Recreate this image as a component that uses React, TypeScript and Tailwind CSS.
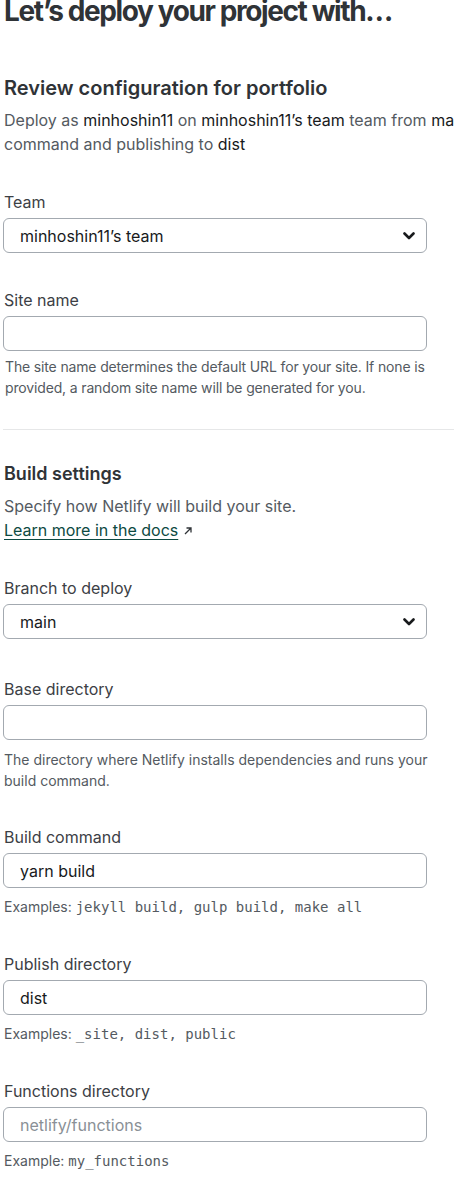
import React from 'react';

const font = { fontFamily: 'Inter, "Noto Sans", sans-serif' };

function Chevron() {
  return (
    <svg width="12" height="8" viewBox="0 0 12 8" className="text-[#181a1c]">
      <path d="M1.5 1.5 L6 6 L10.5 1.5" fill="none" stroke="currentColor" strokeWidth="2.6" strokeLinecap="round" strokeLinejoin="round" />
    </svg>
  );
}

function Label({ children }: { children: React.ReactNode }) {
  return <label className="block text-[16px] leading-6 text-[#3c4045]">{children}</label>;
}

function Field({ value, placeholder, select }: { value?: string; placeholder?: string; select?: boolean }) {
  return (
    <div className="mt-[4px] w-[424px] h-[35px] border border-[#a3a9b0] rounded-[6px] flex items-center justify-between pl-4 pr-[11px] bg-white">
      {value ? (
        <span className="text-[16px] text-[#181a1c]">{value}</span>
      ) : (
        <span className="text-[16px] text-[#8a9096]">{placeholder}</span>
      )}
      {select && <Chevron />}
    </div>
  );
}

function Help({ children, top = 'mt-[5px]' }: { children: React.ReactNode; top?: string }) {
  return <p className={`${top} text-[14px] leading-[21px] text-[#545a61]`}>{children}</p>;
}

const Code = ({ children }: { children: React.ReactNode }) => (
  <code className="text-[14px]" style={{ fontFamily: '"DejaVu Sans Mono", "Liberation Mono", monospace' }}>{children}</code>
);

export default function App() {
  return (
    <div className="w-[454px] h-[1185px] overflow-hidden bg-white" style={font}>
      <div className="w-[680px] pl-[3px]">
        <h1 className="-mt-[5px] pl-[1px] text-[28px] leading-[32px] font-bold text-[#2f3337] tracking-[-1.4px]">
          Let’s deploy your project with…
        </h1>

        {/* review */}
        <h2 className="mt-[47px] pl-[1px] text-[20px] leading-7 font-semibold text-[#2f3337]">
          Review configuration for portfolio
        </h2>
        <p className="mt-[6px] pl-[1px] w-[650px] text-[16px] leading-6 text-[#545a61]">
          Deploy as <span className="text-[#181a1c]">minhoshin11</span> on{' '}
          <span className="text-[#181a1c]">minhoshin11’s team</span> team from{' '}
          <span className="text-[#181a1c]">main</span> branch using <span className="text-[#181a1c]">yarn build</span>{' '}
          command and publishing to <span className="text-[#181a1c]">dist</span>
        </p>

        <div className="mt-[34px] pl-[1px]">
          <Label>Team</Label>
        </div>
        <Field value="minhoshin11’s team" select />

        <div className="mt-[35px] pl-[1px]">
          <Label>Site name</Label>
        </div>
        <Field />
        <div className="pl-[2px]">
          <Help>
            <span className="tracking-[-0.15px]">
              The site name determines the default URL for your site. If none is
              <br />
              provided, a random site name will be generated for you.
            </span>
          </Help>
        </div>

        <div className="mt-[31px] w-[451px] border-t border-[#e6e7e8]" />

        {/* build settings */}
        <h3 className="mt-[31px] pl-[1px] text-[18px] leading-[26px] font-semibold text-[#2f3337]">Build settings</h3>
        <p className="mt-[7px] pl-[1px] text-[16px] leading-6 text-[#545a61]">
          Specify how Netlify will build your site.
          <br />
          <a className="text-[#0d4a42] underline underline-offset-[3px] decoration-1">Learn more in the docs</a>
          <svg width="10" height="10" viewBox="0 0 10 10" className="inline-block ml-[5px] mb-[2px] text-[#2f3337]">
            <path d="M2 8 L8 2 M3.5 2 H8 V6.5" fill="none" stroke="currentColor" strokeWidth="1.3" />
          </svg>
        </p>

        <div className="mt-[34px] pl-[1px]">
          <Label>Branch to deploy</Label>
        </div>
        <Field value="main" select />

        <div className="mt-[38px] pl-[1px]">
          <Label>Base directory</Label>
        </div>
        <Field />
        <div className="pl-[1px]">
          <Help top="mt-[9px]">
            The directory where Netlify installs dependencies and runs your
            <br />
            build command.
          </Help>
        </div>

        <div className="mt-[34px] pl-[1px]">
          <Label>Build command</Label>
        </div>
        <Field value="yarn build" />
        <div className="pl-[1px]">
          <Help top="mt-[8px]">
            Examples: <Code>jekyll build, gulp build, make all</Code>
          </Help>
        </div>

        <div className="mt-[34px] pl-[1px]">
          <Label>Publish directory</Label>
        </div>
        <Field value="dist" />
        <div className="pl-[1px]">
          <Help top="mt-[8px]">
            Examples: <Code>_site, dist, public</Code>
          </Help>
        </div>

        <div className="mt-[34px] pl-[1px]">
          <Label>Functions directory</Label>
        </div>
        <Field placeholder="netlify/functions" />
        <div className="pl-[1px]">
          <Help top="mt-[8px]">
            Example: <Code>my_functions</Code>
          </Help>
        </div>
      </div>
    </div>
  );
}
